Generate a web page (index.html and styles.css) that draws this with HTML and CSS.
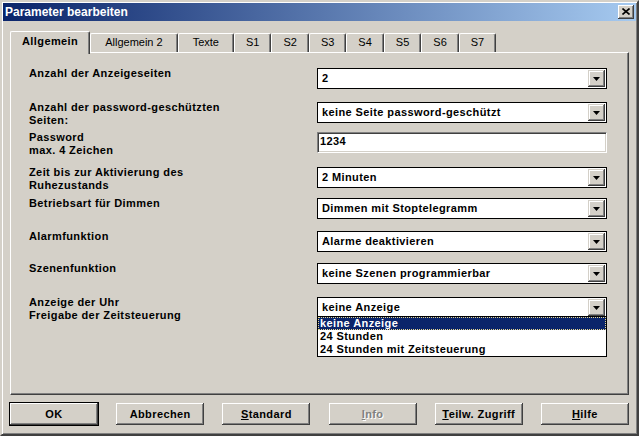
FILE: index.html
```html
<!DOCTYPE html>
<html lang="de">
<head>
    <meta charset="UTF-8">
    <title>Parameter bearbeiten</title>
    <link rel="stylesheet" href="styles.css">
</head>
<body>
    <div class="window">
        <!-- Titelleiste -->
        <div class="titlebar">
            <span class="title">Parameter bearbeiten</span>
            <button class="close-btn" type="button">
                <svg width="8" height="7" viewBox="0 0 8 7"><path d="M0.5 0.5 L7.5 6.5 M7.5 0.5 L0.5 6.5" stroke="#000" stroke-width="1.6" fill="none"/></svg>
            </button>
        </div>

        <!-- Registerkarten -->
        <div class="tabstrip">
            <div class="tab active">Allgemein</div>
            <div class="tab">Allgemein 2</div>
            <div class="tab">Texte</div>
            <div class="tab short">S1</div>
            <div class="tab short">S2</div>
            <div class="tab short">S3</div>
            <div class="tab short">S4</div>
            <div class="tab short">S5</div>
            <div class="tab short">S6</div>
            <div class="tab short">S7</div>
        </div>

        <div class="panel">
            <div class="form">
                <div class="label">Anzahl der Anzeigeseiten</div>
                <div class="combo">
                    <span class="value">2</span>
                    <span class="drop"><svg width="7" height="4" viewBox="0 0 7 4"><polygon points="0,0 7,0 3.5,4" fill="#000"/></svg></span>
                </div>

                <div class="label">Anzahl der password-geschützten<br>Seiten:</div>
                <div class="combo">
                    <span class="value">keine Seite password-geschützt</span>
                    <span class="drop"><svg width="7" height="4" viewBox="0 0 7 4"><polygon points="0,0 7,0 3.5,4" fill="#000"/></svg></span>
                </div>

                <div class="label">Password<br>max. 4 Zeichen</div>
                <div class="textbox">1234</div>

                <div class="label">Zeit bis zur Aktivierung des<br>Ruhezustands</div>
                <div class="combo">
                    <span class="value">2 Minuten</span>
                    <span class="drop"><svg width="7" height="4" viewBox="0 0 7 4"><polygon points="0,0 7,0 3.5,4" fill="#000"/></svg></span>
                </div>

                <div class="label">Betriebsart für Dimmen</div>
                <div class="combo">
                    <span class="value">Dimmen mit Stoptelegramm</span>
                    <span class="drop"><svg width="7" height="4" viewBox="0 0 7 4"><polygon points="0,0 7,0 3.5,4" fill="#000"/></svg></span>
                </div>

                <div class="label">Alarmfunktion</div>
                <div class="combo">
                    <span class="value">Alarme deaktivieren</span>
                    <span class="drop"><svg width="7" height="4" viewBox="0 0 7 4"><polygon points="0,0 7,0 3.5,4" fill="#000"/></svg></span>
                </div>

                <div class="label">Szenenfunktion</div>
                <div class="combo">
                    <span class="value">keine Szenen programmierbar</span>
                    <span class="drop"><svg width="7" height="4" viewBox="0 0 7 4"><polygon points="0,0 7,0 3.5,4" fill="#000"/></svg></span>
                </div>

                <div class="label">Anzeige der Uhr<br>Freigabe der Zeitsteuerung</div>
                <div class="combo open">
                    <span class="value">keine Anzeige</span>
                    <span class="drop"><svg width="7" height="4" viewBox="0 0 7 4"><polygon points="0,0 7,0 3.5,4" fill="#000"/></svg></span>
                    <!-- aufgeklappte Liste -->
                    <ul class="droplist">
                        <li class="selected">keine Anzeige</li>
                        <li>24 Stunden</li>
                        <li>24 Stunden mit Zeitsteuerung</li>
                    </ul>
                </div>
            </div>
        </div>

        <!-- Schaltflächen -->
        <div class="buttons">
            <button class="btn default" type="button">OK</button>
            <button class="btn" type="button">Abbrechen</button>
            <button class="btn" type="button"><u>S</u>tandard</button>
            <button class="btn disabled" type="button"><u>I</u>nfo</button>
            <button class="btn" type="button"><u>T</u>eilw. Zugriff</button>
            <button class="btn" type="button"><u>H</u>ilfe</button>
        </div>
    </div>
</body>
</html>
```

FILE: styles.css
```css
html, body {
    margin: 0;
    padding: 0;
    overflow: hidden;
}
body {
    font-family: "Liberation Sans", Arial, sans-serif;
    font-size: 11px;
    background: #d4d0c8;
}
.window {
    box-sizing: border-box;
    width: 639px;
    height: 436px;
    padding: 1px;
    background: #d4d0c8;
    border: 2px solid;
    border-color: #d4d0c8 #404040 #404040 #d4d0c8;
    box-shadow: inset 1px 1px #fff, inset -1px -1px #808080;
}
.titlebar {
    height: 18px;
    display: flex;
    align-items: center;
    justify-content: space-between;
    padding: 0 2px 0 2px;
    background: linear-gradient(to right, #0a246a, #a6caf0);
}
.title {
    color: #fff;
    font-weight: bold;
    font-size: 12px;
    line-height: 18px;
}
.close-btn {
    width: 16px;
    height: 14px;
    padding: 0;
    margin-bottom: 1px;
    border: none;
    background: #d4d0c8;
    display: flex;
    align-items: center;
    justify-content: center;
    box-shadow: inset -1px -1px #404040, inset 1px 1px #fff, inset -2px -2px #808080;
}
.close-btn svg {
    display: block;
}

/* Registerkarten */
.tabstrip {
    display: flex;
    align-items: flex-end;
    height: 21px;
    margin: 10px 7px 0 7px;
}
.tab {
    position: relative;
    height: 19px;
    box-sizing: border-box;
    padding: 0 14px;
    line-height: 17px;
    border-top: 1px solid #fff;
    border-left: 1px solid #fff;
    border-right: 1px solid #404040;
    border-top-left-radius: 2px;
    border-top-right-radius: 2px;
    box-shadow: inset -1px 0 #808080;
    white-space: nowrap;
}
.tab.short {
    padding: 0 11px;
}
.tab.active {
    height: 23px;
    margin-bottom: -2px;
    padding: 0 11px 2px 11px;
    line-height: 19px;
    font-weight: bold;
    letter-spacing: 0.4px;
    background: #d4d0c8;
    z-index: 1;
}

.panel {
    box-sizing: border-box;
    height: 343px;
    margin: 0 7px;
    padding: 15px 0 0 18px;
    border: 1px solid;
    border-color: #fff #404040 #404040 #fff;
    box-shadow: inset -1px -1px #808080;
}
.form {
    display: grid;
    grid-template-columns: 288px 290px;
    grid-template-rows: 34px 30px 35px 31px 33px 32px 34px 21px;
    align-items: start;
}
.label {
    margin-top: -1px;
    font-weight: bold;
    letter-spacing: 0.4px;
    line-height: 13px;
}

/* Kombinationsfeld */
.combo {
    position: relative;
    box-sizing: border-box;
    height: 21px;
    display: flex;
    align-items: center;
    padding: 1px;
    border: 1px solid #000;
    background: #fff;
    font-weight: bold;
    letter-spacing: 0.4px;
}
.combo .value {
    flex: 1;
    padding-left: 3px;
    line-height: 13px;
    white-space: nowrap;
}
.combo .drop {
    width: 17px;
    height: 17px;
    display: flex;
    align-items: center;
    justify-content: center;
    background: #d4d0c8;
    box-shadow: inset -1px -1px #404040, inset 1px 1px #d4d0c8, inset -2px -2px #808080, inset 2px 2px #fff;
}
.combo .drop svg {
    display: block;
    margin-top: 1px;
}
.droplist {
    position: absolute;
    left: -1px;
    right: -1px;
    top: calc(100% - 1px);
    margin: 0;
    padding: 0;
    list-style: none;
    background: #fff;
    border: 1px solid #000;
    z-index: 2;
}
.droplist li {
    height: 13px;
    line-height: 13px;
    padding-left: 2px;
}
.droplist li.selected {
    background: #0a246a;
    color: #fff;
    outline: 1px dotted #e8d890;
    outline-offset: -1px;
}

.textbox {
    box-sizing: border-box;
    height: 21px;
    padding: 0 2px;
    line-height: 17px;
    font-weight: bold;
    letter-spacing: 0.4px;
    background: #fff;
    border: 1px solid;
    border-color: #808080 #fff #fff #808080;
    box-shadow: inset 1px 1px #404040, inset -1px -1px #d4d0c8;
}

/* Schaltflächen */
.buttons {
    display: flex;
    justify-content: space-between;
    margin: 8px 7px 0 7px;
}
.btn {
    width: 88px;
    height: 22px;
    padding: 0;
    border: none;
    background: #d4d0c8;
    font-family: "Liberation Sans", Arial, sans-serif;
    font-size: 11px;
    font-weight: bold;
    letter-spacing: 0.4px;
    color: #000;
    box-shadow: inset -1px -1px #404040, inset 1px 1px #fff, inset -2px -2px #808080, inset 2px 2px #d4d0c8;
}
.btn.default {
    outline: 1px solid #000;
}
.btn.disabled {
    color: #808080;
    text-shadow: 1px 1px #fff;
}
```
